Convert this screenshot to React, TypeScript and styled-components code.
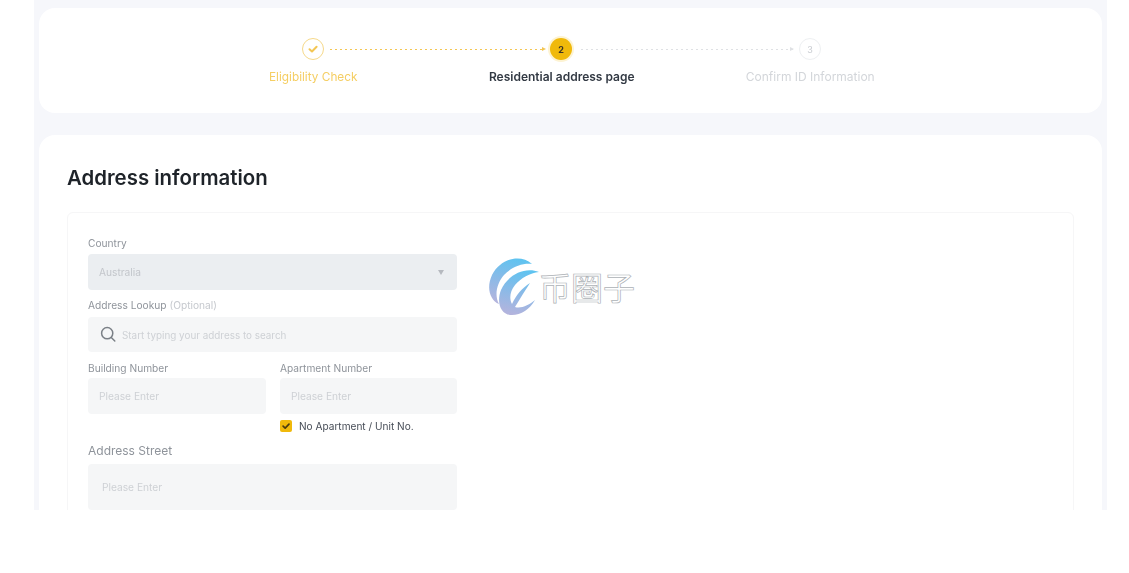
import React from "react";
import styled, { createGlobalStyle } from "styled-components";

const Global = createGlobalStyle`
  html, body { margin: 0; padding: 0; background: #fff; }
  body { font-family: "Inter", "Roboto", "Liberation Sans", sans-serif; }
`;

const Viewport = styled.div`
  position: relative;
  width: 1129px;
  height: 573px;
  overflow: hidden;
  background: #fff;
`;

const Page = styled.main`
  margin-left: 34px;
  width: 1073px;
  height: 510px;
  box-sizing: border-box;
  padding: 8px 5px 0;
  overflow: hidden;
  background: #f6f7fb;
  display: flex;
  flex-direction: column;
  gap: 22px;
  filter: blur(0.45px);
`;

const Card = styled.section`
  background: #fff;
  border-radius: 16px;
  flex: none;
`;

const StepCard = styled(Card)`
  height: 105px;
  box-sizing: border-box;
  padding: 29px 0 0 150px;
`;

const IconRow = styled.div`
  display: flex;
  align-items: center;
  height: 24px;
  padding-left: 113px;
`;

const Connector = styled.div<{ $w: number; $ml: number; $mr: number; $color: string }>`
  width: ${(p) => p.$w}px;
  margin: 0 ${(p) => p.$mr}px 0 ${(p) => p.$ml}px;
  height: 1px;
  background: repeating-linear-gradient(90deg, ${(p) => p.$color} 0 2px, transparent 2px 5px);
  position: relative;
  &::after {
    content: "";
    position: absolute;
    right: -1px;
    top: -2px;
    border-left: 4px solid ${(p) => p.$color};
    border-top: 2.5px solid transparent;
    border-bottom: 2.5px solid transparent;
  }
`;

const StepDot = styled.div<{ $kind: "done" | "active" | "todo" }>`
  width: 22px;
  height: 22px;
  flex: none;
  box-sizing: border-box;
  border-radius: 50%;
  display: flex;
  align-items: center;
  justify-content: center;
  font-size: 9px;
  font-weight: ${(p) => (p.$kind === "active" ? 700 : 400)};
  border: ${(p) =>
    p.$kind === "done" ? "1.5px solid #f6d98a" : p.$kind === "todo" ? "1.5px solid #eef0f2" : "none"};
  background: ${(p) => (p.$kind === "active" ? "#f0b90b" : "#fff")};
  color: ${(p) => (p.$kind === "active" ? "#3a3326" : "#c9ccd1")};
  box-shadow: ${(p) => (p.$kind === "active" ? "0 0 0 2px #fdf3d2" : "none")};
`;

const LabelRow = styled.div`
  display: grid;
  grid-template-columns: repeat(3, 248.5px);
  margin-top: 8px;
`;

const StepLabel = styled.div<{ $kind: "done" | "active" | "todo" }>`
  text-align: center;
  font-size: ${(p) => (p.$kind === "done" ? 11.8 : 12)}px;
  line-height: 16px;
  font-weight: ${(p) => (p.$kind === "active" ? 600 : 400)};
  color: ${(p) =>
    p.$kind === "done" ? "#f5ce63" : p.$kind === "active" ? "#333a44" : "#d3d6da"};
`;

const AddressCard = styled(Card)`
  padding: 29px 28px 0;
  height: 500px;
`;

const Title = styled.h1`
  margin: 0;
  font-size: 20.4px;
  line-height: 28px;
  font-weight: 600;
  color: #1e2329;
`;

const FormBox = styled.div`
  margin-top: 20px;
  border: 1px solid #f6f6f7;
  border-radius: 6px;
  padding: 23px 20px;
  height: 400px;
`;

const Form = styled.div`
  width: 369px;
  display: flex;
  flex-direction: column;
`;

const Label = styled.div<{ $top?: number; $bottom?: number }>`
  font-size: 10.2px;
  line-height: 14px;
  color: #8f949b;
  margin-top: ${(p) => p.$top ?? 0}px;
  margin-bottom: ${(p) => p.$bottom ?? 3}px;
`;

const Optional = styled.span`
  color: #c6c9ce;
`;

const Control = styled.div<{ $h?: number; $tone?: string; $pad?: number; $gap?: number }>`
  height: ${(p) => p.$h ?? 36}px;
  background: ${(p) => p.$tone ?? "#f5f6f7"};
  border-radius: 4px;
  display: flex;
  align-items: center;
  gap: ${(p) => p.$gap ?? 5}px;
  padding-left: ${(p) => p.$pad ?? 11}px;
  padding-right: 13px;
  box-sizing: border-box;
`;

const Placeholder = styled.span<{ $color?: string; $size?: number }>`
  font-size: ${(p) => p.$size ?? 10.2}px;
  color: ${(p) => p.$color ?? "#ced1d5"};
`;

const Caret = styled.span`
  margin-left: auto;
  border-top: 5px solid #b5b9bf;
  border-left: 3.5px solid transparent;
  border-right: 3.5px solid transparent;
`;

const Pair = styled.div`
  display: grid;
  grid-template-columns: 178px 177px;
  column-gap: 14px;
  margin-top: 9px;
`;

const CheckRow = styled.div`
  display: flex;
  align-items: center;
  gap: 7px;
  margin-top: 5px;
  height: 13px;
`;

const CheckBox = styled.span`
  width: 12px;
  height: 12px;
  border-radius: 2px;
  background: #f0b90b;
  display: flex;
  align-items: center;
  justify-content: center;
`;

const CheckText = styled.span`
  font-size: 10.1px;
  color: #474d57;
`;

const StreetLabel = styled.div`
  font-size: 12px;
  line-height: 16px;
  color: #8f949b;
  margin-top: 11px;
  margin-bottom: 5px;
`;

const Mark = styled.div`
  position: absolute;
  left: 488px;
  top: 256px;
  display: flex;
  align-items: center;
`;

const MarkText = styled.span`
  font-family: "Noto Sans CJK SC", sans-serif;
  font-size: 32px;
  line-height: 32px;
  margin-left: -1px;
  margin-top: -1px;
  color: #fff;
  -webkit-text-stroke: 0.7px #adb1b6;
`;

const Tick = ({ color, size }: { color: string; size: number }) => (
  <svg width={size} height={size} viewBox="0 0 12 12" fill="none">
    <path d="M2.5 6.2 5 8.5 9.6 3.8" stroke={color} strokeWidth="2" strokeLinecap="round" strokeLinejoin="round" />
  </svg>
);

const Search = () => (
  <svg width="17" height="17" viewBox="0 0 17 17" fill="none">
    <circle cx="7.2" cy="7.2" r="5.6" stroke="#7b8087" strokeWidth="1.5" />
    <path d="M11.3 11.5 14.8 15" stroke="#7b8087" strokeWidth="1.5" strokeLinecap="round" />
  </svg>
);

const Logo = () => (
  <svg width="52" height="60" viewBox="0 0 52 60">
    <defs>
      <linearGradient id="lg" x1="0.6" y1="0" x2="0.4" y2="1">
        <stop offset="0" stopColor="#5fc3f0" />
        <stop offset="0.55" stopColor="#8fb9e6" />
        <stop offset="1" stopColor="#b3b4dd" />
      </linearGradient>
    </defs>
    <path
      d="M44 8 C32 -3 12 3 4 19 C-2 32 2 44 11 48 C6 39 9 27 16 19 C24 11 34 7 44 8 Z"
      fill="url(#lg)"
    />
    <path
      d="M51 16 C36 10 19 20 13 34 C8 47 13 59 24 59 C33 59 42 53 47 44 C41 49 33 53 27 51 C33 41 38 33 42 27 C34 32 28 39 24 48 C21 43 22 35 27 29 C33 22 42 17 51 16 Z"
      fill="url(#lg)"
      fillRule="evenodd"
    />
  </svg>
);

export default function App() {
  return (
    <Viewport>
      <Global />
      <Page>
        <StepCard>
          <IconRow>
            <StepDot $kind="done">
              <Tick color="#f3c654" size={12} />
            </StepDot>
            <Connector $w={215} $ml={6} $mr={5} $color="#f3c654" />
            <StepDot $kind="active">2</StepDot>
            <Connector $w={212} $ml={9} $mr={6} $color="#dfe1e4" />
            <StepDot $kind="todo">3</StepDot>
          </IconRow>
          <LabelRow>
            <StepLabel $kind="done">Eligibility Check</StepLabel>
            <StepLabel $kind="active">Residential address page</StepLabel>
            <StepLabel $kind="todo">Confirm ID Information</StepLabel>
          </LabelRow>
        </StepCard>
        <AddressCard>
          <Title>Address information</Title>
          <FormBox>
            <Form>
              <Label $bottom={4}>Country</Label>
              <Control $tone="#ebeef1">
                <Placeholder $color="#c3c6cb">Australia</Placeholder>
                <Caret />
              </Control>
              <Label $top={8} $bottom={5}>
                Address Lookup <Optional>(Optional)</Optional>
              </Label>
              <Control $h={35} $pad={12}>
                <Search />
                <Placeholder $size={9.9}>Start typing your address to search</Placeholder>
              </Control>
              <Pair>
                <div>
                  <Label>Building Number</Label>
                  <Control>
                    <Placeholder>Please Enter</Placeholder>
                  </Control>
                </div>
                <div>
                  <Label>Apartment Number</Label>
                  <Control>
                    <Placeholder>Please Enter</Placeholder>
                  </Control>
                  <CheckRow>
                    <CheckBox>
                      <Tick color="#4a3c10" size={10} />
                    </CheckBox>
                    <CheckText>No Apartment / Unit No.</CheckText>
                  </CheckRow>
                </div>
              </Pair>
              <StreetLabel>Address Street</StreetLabel>
              <Control $h={46} $pad={14}>
                <Placeholder>Please Enter</Placeholder>
              </Control>
            </Form>
          </FormBox>
        </AddressCard>
      </Page>
      <Mark>
        <Logo />
        <MarkText>币圈子</MarkText>
      </Mark>
    </Viewport>
  );
}
